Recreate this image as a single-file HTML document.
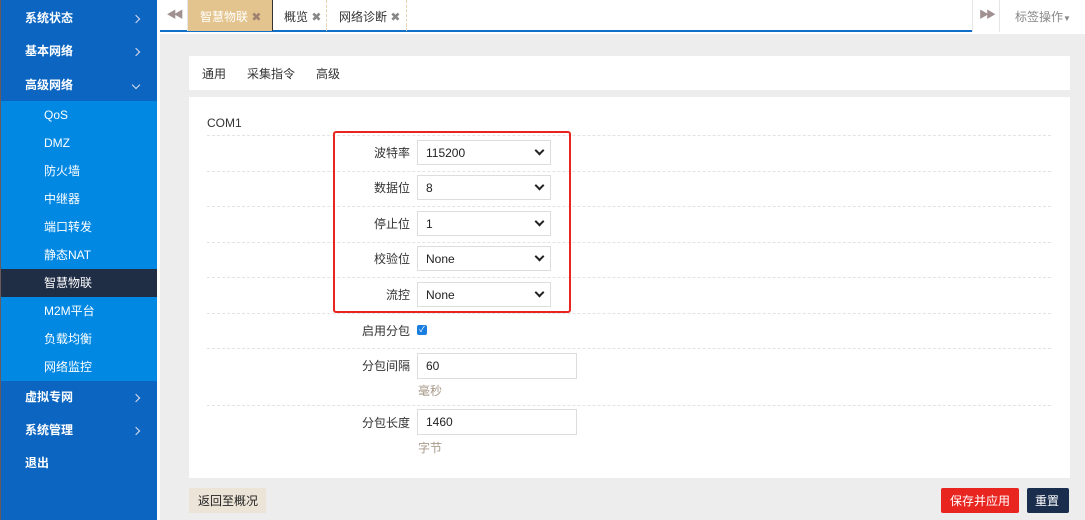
<!DOCTYPE html>
<html><head><meta charset="utf-8"><style>
*{margin:0;padding:0;box-sizing:border-box}
body{width:1085px;height:520px;overflow:hidden;position:relative;font-family:"Liberation Sans","Noto Sans CJK SC",sans-serif;font-size:12px;line-height:14px;background:#fff;color:#333}
.a{position:absolute}
#side{left:0;top:0;width:157px;height:520px;background:#0c66c1;border-left:1px solid #6b5a5a}
.top{position:absolute;left:24px;color:#fff;font-weight:bold;font-size:12px}
.arr{position:absolute;left:132px;width:6px;height:6px;border-right:1.5px solid #dde;border-top:1.5px solid #dde;transform:rotate(45deg)}
.arr.d{transform:rotate(135deg)}
#sub{left:1px;top:101px;width:156px;height:280px;background:#0088e3}
.si{position:absolute;left:43px;color:#fff;font-size:12px}
#main{left:160px;top:34px;width:925px;height:486px;background:#ededed}
.sel{position:absolute;left:417px;width:134px;height:25px;border:1px solid #ddd;background:#fff;font-size:12px;color:#222;padding:5px 8px}
.sel:after{content:"";position:absolute;right:7px;top:6px;width:5px;height:5px;border-right:2px solid #222;border-bottom:2px solid #222;transform:rotate(45deg)}
.lab{position:absolute;right:675px;font-size:12px;color:#333;text-align:right}
.ln{position:absolute;left:207px;width:844px;border-top:1px dashed #e3e3e3}
.inp{position:absolute;left:417px;width:160px;height:26px;border:1px solid #ddd;background:#fff;padding:5px 8px;color:#222}
.help{position:absolute;left:418px;color:#a89a8a;font-size:12px}
</style></head><body>
<div id="side" class="a">
<div class="top" style="top:11px">系统状态</div><div class="arr" style="top:16px"></div>
<div class="top" style="top:44px">基本网络</div><div class="arr" style="top:49px"></div>
<div class="top" style="top:78px">高级网络</div><div class="arr d" style="top:82px"></div>
<div class="top" style="top:390px">虚拟专网</div><div class="arr" style="top:395px"></div>
<div class="top" style="top:423px">系统管理</div><div class="arr" style="top:428px"></div>
<div class="top" style="top:456px">退出</div>
</div>
<div id="sub" class="a">
<div class="si" style="top:7px">QoS</div>
<div class="si" style="top:35px">DMZ</div>
<div class="si" style="top:63px">防火墙</div>
<div class="si" style="top:91px">中继器</div>
<div class="si" style="top:119px">端口转发</div>
<div class="si" style="top:147px">静态NAT</div>
<div class="a" style="left:0;top:168px;width:156px;height:28px;background:#1f2d45"></div>
<div class="si" style="top:175px">智慧物联</div>
<div class="si" style="top:203px">M2M平台</div>
<div class="si" style="top:231px">负载均衡</div>
<div class="si" style="top:259px">网络监控</div>
</div>
<div class="a" style="left:160px;top:0;width:925px;height:32px;background:#fff;border-bottom:2px solid #1070c8"></div>
<div class="a" style="left:160px;top:0;width:28px;height:31px;border-right:1px solid #e5e5e5;color:#a09090;font-size:10px;text-align:center;line-height:32px;letter-spacing:-3px">◀◀</div>
<div class="a" style="left:188px;top:0;width:84px;height:31px;background:#e4c48e;color:#fff;font-size:12px;padding:10px 0 0 12px">智慧物联 <span style="color:#a08070">✖</span></div>
<div class="a" style="left:272px;top:0;width:55px;height:31px;border-left:1px solid #333;border-right:1px dashed #e5d0b0;padding:10px 0 0 11px;color:#333">概览 <span style="color:#888">✖</span></div>
<div class="a" style="left:327px;top:0;width:80px;height:31px;border-right:1px dashed #e5d0b0;padding:10px 0 0 12px;color:#333">网络诊断 <span style="color:#888">✖</span></div>
<div class="a" style="left:972px;top:0;width:28px;height:32px;background:#fff;border-left:1px solid #e5e5e5;border-right:1px solid #e5e5e5;color:#a09090;font-size:10px;text-align:center;line-height:32px;letter-spacing:-3px">▶▶</div>
<div class="a" style="left:1000px;top:0;width:85px;height:32px;background:#fff;color:#888;padding:10px 0 0 15px">标签操作<span style="font-size:8px">▼</span></div>
<div id="main" class="a"></div>
<div class="a" style="left:189px;top:56px;width:881px;height:34px;background:#fff"></div>
<div class="a" style="left:202px;top:67px">通用</div>
<div class="a" style="left:247px;top:67px">采集指令</div>
<div class="a" style="left:316px;top:67px">高级</div>
<div class="a" style="left:189px;top:97px;width:881px;height:381px;background:#fff"></div>
<div class="a" style="left:207px;top:116px">COM1</div>
<div class="ln" style="top:135px"></div>
<div class="ln" style="top:171px"></div>
<div class="ln" style="top:206px"></div>
<div class="ln" style="top:242px"></div>
<div class="ln" style="top:277px"></div>
<div class="ln" style="top:313px"></div>
<div class="ln" style="top:348px"></div>
<div class="ln" style="top:405px"></div>
<div class="lab" style="top:146px">波特率</div><div class="sel" style="top:140px">115200</div>
<div class="lab" style="top:181px">数据位</div><div class="sel" style="top:175px">8</div>
<div class="lab" style="top:217px">停止位</div><div class="sel" style="top:211px">1</div>
<div class="lab" style="top:252px">校验位</div><div class="sel" style="top:246px">None</div>
<div class="lab" style="top:288px">流控</div><div class="sel" style="top:282px">None</div>
<div class="a" style="left:333px;top:131px;width:238px;height:182px;border:2px solid #e8251f;border-radius:3px"></div>
<div class="lab" style="top:324px">启用分包</div>
<div class="a" style="left:417px;top:325px;width:10px;height:10px;background:#1a7ee0;border-radius:2px;color:#fff;font-size:8px;line-height:10px;text-align:center">✓</div>
<div class="lab" style="top:359px">分包间隔</div><div class="inp" style="top:353px">60</div>
<div class="help" style="top:384px">毫秒</div>
<div class="lab" style="top:416px">分包长度</div><div class="inp" style="top:409px">1460</div>
<div class="help" style="top:441px">字节</div>
<div class="a" style="left:189px;top:488px;width:77px;height:25px;background:#ece4d6;color:#222;padding:6px 0 0 9px">返回至概况</div>
<div class="a" style="left:941px;top:488px;width:78px;height:25px;background:#e8251f;color:#fff;border-radius:2px;padding:6px 0 0 9px">保存并应用</div>
<div class="a" style="left:1027px;top:488px;width:42px;height:25px;background:#1b2d4d;color:#fff;border-radius:2px;padding:6px 0 0 8px">重置</div>
</body></html>
